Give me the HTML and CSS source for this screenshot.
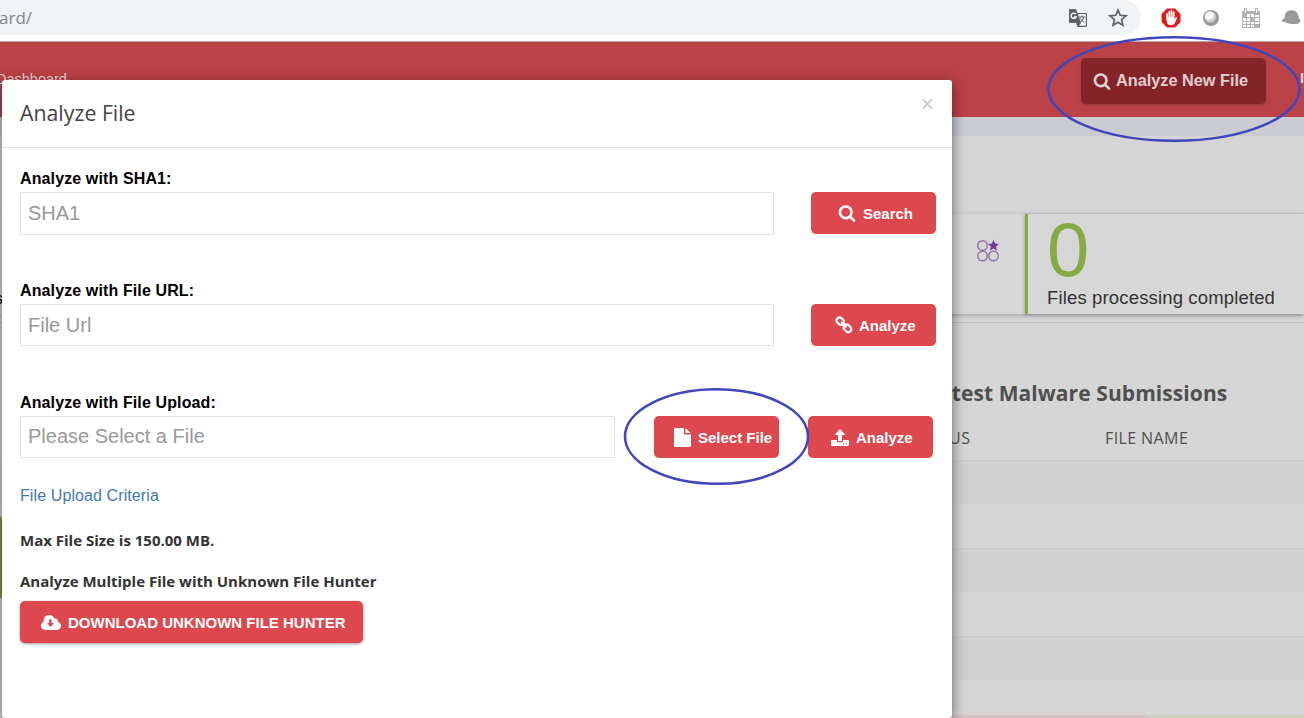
FILE: index.html
```
<!DOCTYPE html>
<html lang="en">
<head>
<meta charset="utf-8">
<title>Dashboard</title>
<link rel="stylesheet" href="styles.css">
</head>
<body>
<svg class="defs" width="0" height="0">
  <symbol id="search" viewBox="0 0 1792 1792"><path d="M1216 832q0-185-131.500-316.500t-316.500-131.500-316.500 131.500-131.500 316.500 131.500 316.500 316.500 131.500 316.500-131.500 131.500-316.500zm512 832q0 52-38 90t-90 38q-54 0-90-38l-343-342q-179 124-399 124-143 0-273.500-55.500t-225-150-150-225-55.500-273.500 55.500-273.500 150-225 225-150 273.500-55.500 273.500 55.500 225 150 150 225 55.500 273.500q0 220-124 399l343 343q37 37 37 90z"/></symbol>
</svg>
<div class="screen">
  <div class="browser">
    <div class="address"><span class="url">ard/</span>
      <svg class="translate" width="20" height="20" viewBox="0 0 20 20"><path fill="#5f6368" d="M2 1h6l1.500 4H18q1 0 1 1v12q0 1-1 1H9.500L8 15H2q-1 0-1-1V2q0-1 1-1z"/><path fill="#f1f3f4" d="M10 6h7.800v11.700H11l2-2.700z"/><path d="M8 6.200A2.700 2.700 0 1 0 8.200 9H5.800" fill="none" stroke="#fff" stroke-width="1.300"/><path d="M11 9h6M14 7.500V9m1.800 0q-.8 4-4 5.500m.7-4q1.500 3 3.800 4" fill="none" stroke="#5f6368"/></svg>
      <svg class="star" width="20" height="20" viewBox="0 0 20 20"><path d="M10 2l2.200 5.300 5.800.5-4.400 3.800 1.300 5.700-4.900-3-4.900 3 1.300-5.700L2 7.800l5.800-.5z" fill="none" stroke="#5f6368" stroke-width="1.700"/></svg>
    </div>
    <div class="extensions">
      <svg width="20" height="20" viewBox="0 0 20 20"><path fill="#dc1d1b" d="M6 .5h8l5.500 5.500v8L14 19.500H6L.5 14V6z"/><path fill="#fff" d="M5.200 11V6q0-1 .9-1t.9 1v3h.4V3.700q0-1 .9-1t.9 1V9h.4V2.700q0-1 .9-1t.9 1V9h.4V4.200q0-1 .9-1t.9 1v7.300l1-2q.7-1 1.500-.3-.8 3.300-2.500 6.300-.7 1.800-3 1.800-4.400 0-4.500-3z"/></svg>
      <svg width="20" height="20" viewBox="0 0 20 20"><defs><radialGradient id="orb" cx=".4" cy=".35"><stop offset="0" stop-color="#fff"/><stop offset=".65" stop-color="#fafafa"/><stop offset="1" stop-color="#ccc"/></radialGradient></defs><circle cx="10" cy="10" r="8" fill="#999"/><circle cx="9.300" cy="9" r="5.700" fill="url(#orb)"/></svg>
      <svg width="20" height="20" viewBox="0 0 20 20"><path fill="#b2b2b2" d="M1 3h2V0h3v3h8V0h3v3h2v17H1z"/><path fill="#fff" d="M4 1h1v4H4zM15 1h1v4h-1zM6 6h3v3H6zM10 6h3v3h-3zM14 7h4v2h-4zM2 10h3v3H2zM6 10h3v3H6zM14 10h4v3h-4zM2 14h3v2H2zM6 14h3v2H6zM10 14h3v2h-3zM2 17h3v2H2zM6 17h3v2H6zM10 17h3v2h-3zM14 14h4v2h-4z"/></svg>
      <svg width="20" height="20" viewBox="0 0 20 20"><path fill="#999" d="M3.500 10.500q0-7.500 5-8 2-.7 4 0 4.500.5 5.500 8 1.500.5 1.500 2-1 4-6.500 3.500-6 0-8.500-2-3.500 0-3.500-1.500 0-2 2.500-2z"/></svg>
    </div>
  </div>
  <div class="header">
    <span class="crumb">Dashboard</span>
    <button class="new-file"><svg class="ico" width="18" height="18"><use href="#search"/></svg>Analyze New File</button>
    <span class="next-item">I</span>
  </div>
  <div class="strip"></div>
  <div class="intro"></div>
  <div class="stats">
    <span class="stat-tail">s</span>
    <div class="stat-icon"><svg width="24" height="24" viewBox="0 0 24 24"><g fill="none" stroke="#8e74a6" stroke-width="1.400"><circle cx="6.500" cy="6.500" r="4.800"/><circle cx="6.500" cy="17" r="4.800"/><circle cx="17.500" cy="17" r="4.800"/></g><path fill="#713f9b" d="M17.500.8l1.600 3.700 4 .4-3 2.700.9 4.100-3.500-2.100-3.500 2.100.9-4.100-3-2.700 4-.4z"/></svg></div>
    <div class="stat-card"><div class="stat-number">0</div><div class="stat-label">Files processing completed</div></div>
  </div>
  <div class="table-panel">
    <i class="green-edge"></i>
    <h2>Latest Malware Submissions</h2>
    <div class="table-head"><span class="status">STATUS</span><span class="name">FILE NAME</span></div>
    <div class="row odd"></div><div class="row"></div><div class="row odd"></div><div class="row"></div><div class="row odd"></div><div class="row last"></div>
    <div class="legend"><i class="pink"></i><i class="lime"></i></div>
  </div>
  <div class="modal">
    <div class="modal-head"><span class="title">Analyze File</span><span class="close">×</span></div>
    <div class="modal-body">
      <div class="field">
        <label>Analyze with SHA1:</label>
        <div class="controls"><div class="input tall">SHA1</div><button class="btn search"><svg class="ico" width="18" height="18"><use href="#search"/></svg>Search</button></div>
      </div>
      <div class="field">
        <label>Analyze with File URL:</label>
        <div class="controls"><div class="input url-input">File Url</div><button class="btn link"><svg class="ico" width="18" height="18" viewBox="0 0 18 18"><g fill="none" stroke="#fff" stroke-width="2.200" stroke-linecap="round"><rect x="1.300" y="2.200" width="8" height="6" rx="3" transform="rotate(45 5.300 5.200)"/><rect x="8.500" y="9.400" width="8" height="6" rx="3" transform="rotate(45 12.500 12.400)"/><path d="M6.800 6.700l4 4"/></g></svg>Analyze</button></div>
      </div>
      <div class="field">
        <label>Analyze with File Upload:</label>
        <div class="controls"><div class="input short">Please Select a File</div><button class="btn select"><svg class="ico" width="17" height="19" viewBox="0 0 17 19"><path fill="#fff" d="M1.500 0H10v5.500q0 1 1 1h6V17.500q0 1.500-1.500 1.500h-14Q0 19 0 17.500v-16Q0 0 1.500 0zM11.500.3L16.700 5h-5.200z"/></svg>Select File</button><button class="btn upload"><svg class="ico" width="18" height="17" viewBox="0 0 18 17"><path fill="#fff" fill-rule="evenodd" d="M9 0l5.500 6H11v6H7V6H3.500zM1 11h5v1.200q0 1 1 1h4q1 0 1-1V11h5q1 0 1 1v4q0 1-1 1H1q-1 0-1-1v-4q0-1 1-1zm11 3.500v1h1.200v-1zm2.800 0v1H16v-1z"/></svg>Analyze</button></div>
      </div>
      <a class="criteria">File Upload Criteria</a>
      <p class="max">Max File Size is 150.00 MB.</p>
      <p class="multi">Analyze Multiple File with Unknown File Hunter</p>
      <button class="btn download"><svg class="ico" width="20" height="15" viewBox="0 0 20 15"><path fill="#fff" fill-rule="evenodd" d="M4.500 15Q0 14.500 0 10.700 0 8 2.700 6.500 2.500 0 8 0q4 0 5.300 3.500Q17 3 17 7q3 .8 3 4t-4 4zM8.200 4.500V8H6l3.500 4L13 8h-2.300V4.500z"/></svg>DOWNLOAD UNKNOWN FILE HUNTER</button>
    </div>
  </div>
  <svg class="marks" width="1304" height="718"><g fill="none" stroke="#4146bd" stroke-width="2.600"><ellipse cx="1174" cy="89" rx="125.500" ry="51.800"/><ellipse cx="716.500" cy="436.500" rx="91.500" ry="47.300"/></g></svg>
</div>
</body>
</html>
```
FILE: styles.css
```
* { box-sizing: border-box; }
body { margin: 0; overflow: hidden; }
button { border: 0; margin: 0; }
svg { display: block; flex: none; }
.defs { position: absolute; }
.screen { position: relative; width: 1304px; height: 718px; overflow: hidden; display: flex; flex-direction: column; background: #d5d5d5; font-family: "Liberation Sans", Arial, sans-serif; }
.browser { height: 42px; flex: none; display: flex; background: #fff; border-bottom: 1px solid #b8a6a7; }
.address { width: 1141px; height: 35px; background: #f1f3f4; border-radius: 0 18px 18px 0; display: flex; align-items: center; padding-right: 13px; }
.url { flex: 1; color: #80868b; font: 17px/35px "Open Sans", sans-serif; margin-left: -1px; }
.star { margin-left: 20px; }
.extensions { display: flex; gap: 20px; padding: 8px 0 0 20px; }
.header { height: 75px; flex: none; display: flex; background: #bb4247; color: #ead0d1; }
.crumb { flex: none; font-size: 14.5px; line-height: 20px; width: 1085px; margin: 27px 0 0 -4px; }
.new-file { flex: none; display: flex; align-items: center; gap: 5px; width: 185px; height: 46px; margin-top: 16px; padding: 0 0 1px 12px; border-radius: 5px; background: #842429; color: #e0cfd0; font: bold 16.3px "Liberation Sans", sans-serif; white-space: nowrap; box-shadow: 0 1px 3px #0003; }
.ico { fill: currentColor; }
.next-item { margin: 27px 0 0 34px; font-weight: bold; font-size: 15px; }
.strip { height: 19px; flex: none; background: #c9ccd1; border-bottom: 1px solid #cacaca; }
.intro { height: 77px; flex: none; }
.stats { height: 101px; flex: none; display: flex; background: #d7d7d7; border-top: 1px solid #c9c9c9; box-shadow: 0 2px 4px #0003; }
.stat-tail { width: 10px; margin: 76px 0 0 -5px; font-size: 16px; }
.stat-icon { width: 1020px; padding: 25px 0 0 971px; }
.stat-card { flex: 1; border-left: 3px solid #87ab44; padding: 0 0 0 19px; box-shadow: -1px 1px 3px #0003; }
.stat-number { height: 74px; line-height: 72px; font-size: 76px; color: #87ab44; }
.stat-label { font-size: 18.5px; line-height: 20px; color: #333; letter-spacing: .15px; white-space: nowrap; }
.table-panel { flex: none; margin-top: 8px; height: 396px; border-top: 1px solid #bebebe; background: #d6d6d6; font-family: "Open Sans", sans-serif; color: #505050; }
.green-edge { float: left; width: 2px; height: 81px; margin: 194px -2px 0 0; background: #7c9d3f; }
h2 { margin: 55px 0 0 927px; height: 31px; font-size: 21px; line-height: 31px; font-weight: 700; letter-spacing: .08px; white-space: nowrap; }
.table-head { height: 51px; display: flex; padding-left: 911px; font-size: 16px; line-height: 58px; letter-spacing: .4px; }
.status { width: 194px; }
.row { height: 44px; }
.odd { background: #d0d0d0; border-top: 1px solid #cbcbcb; }
.last { height: 35px; }
.legend { display: flex; height: 4px; padding-left: 952px; }
.pink { width: 198px; background: #d7c3c5; }
.lime { flex: 1; background: #d3d3c3; }
.modal { position: absolute; left: 2px; top: 80px; width: 950px; height: 638px; background: #fff; border-radius: 3px; box-shadow: 0 4px 14px #0008; }
.modal-head { height: 68px; display: flex; justify-content: space-between; padding: 0 18px; border-bottom: 1px solid #e5e5e5; }
.title { font: 21.3px/65px "Open Sans", sans-serif; color: #444; }
.close { font-size: 23px; line-height: 48px; color: #ccc; }
.modal-body { padding: 20px 16px 0 18px; }
.field { height: 112px; }
label { display: block; height: 24px; line-height: 21px; font-size: 16px; font-weight: bold; color: #000; letter-spacing: .12px; }
.controls { display: flex; }
.input { width: 754px; height: 42px; border: 1px solid #e1e4e6; padding-left: 7px; line-height: 39px; font-size: 20px; color: #999; }
.tall { height: 43px; line-height: 40px; }
.url-input { line-height: 40px; }
.short { width: 595px; }
.btn { display: flex; align-items: center; width: 125px; height: 42px; border-radius: 5px; background: #dd484e; color: #fff; font: bold 15px "Liberation Sans", sans-serif; gap: 7px; padding: 0 0 0 27px; white-space: nowrap; margin-left: 37px; }
.link { padding-left: 24px; gap: 6px; }
.select { margin-left: 39px; padding-left: 20px; }
.upload { margin-left: 29px; padding-left: 23px; }
.criteria { display: block; color: #4279ad; font-size: 16px; line-height: 22px; margin-top: -19px; letter-spacing: .1px; }
p { margin: 0; font: 700 15px/22px "Open Sans", sans-serif; color: #333; }
.max { margin-top: 22px; }
.multi { margin-top: 19px; }
.download { width: 343px; margin: 9px 0 0; padding-left: 21px; box-shadow: 0 1px 3px #0006; }
.marks { position: absolute; left: 0; top: 0; }
```
